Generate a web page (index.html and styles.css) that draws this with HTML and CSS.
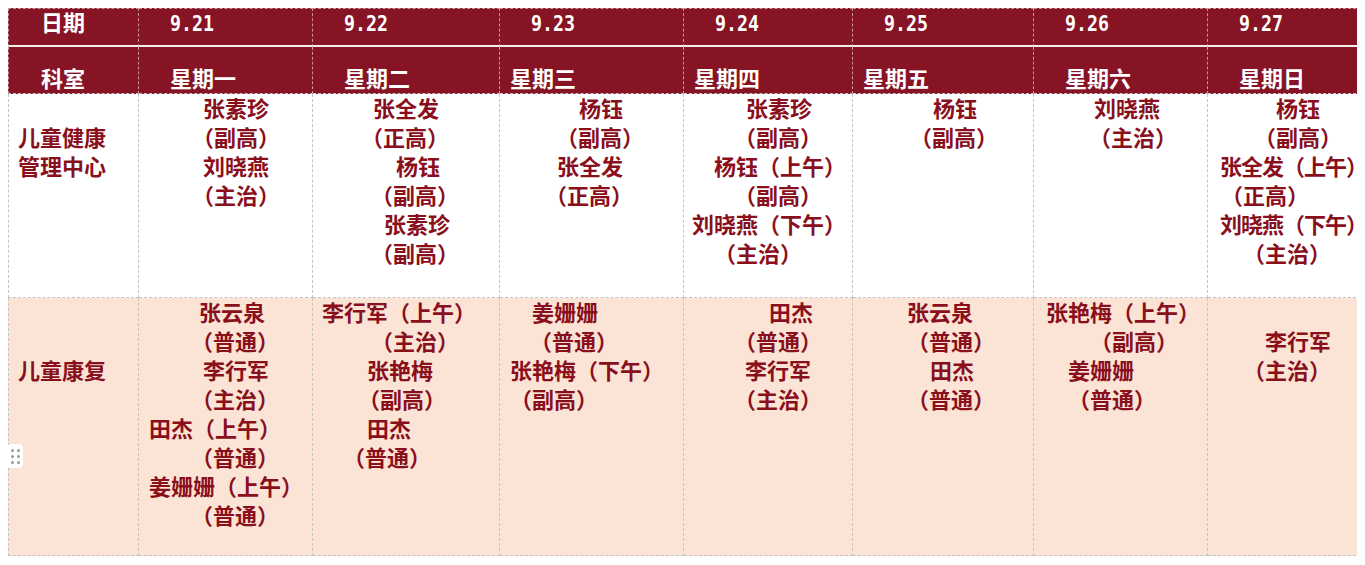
FILE: index.html
```html
<!DOCTYPE html>
<html lang="zh-CN">
<head>
<meta charset="utf-8">
<title>排班表</title>
<link rel="stylesheet" href="styles.css">
</head>
<body>
<div class="sheet">
  <div class="grid">
    <div class="hd r1 first">日期</div>
    <div class="hd r1"><span class="num">9.21</span></div>
    <div class="hd r1"><span class="num">9.22</span></div>
    <div class="hd r1"><span class="num">9.23</span></div>
    <div class="hd r1"><span class="num">9.24</span></div>
    <div class="hd r1"><span class="num">9.25</span></div>
    <div class="hd r1"><span class="num">9.26</span></div>
    <div class="hd r1"><span class="num">9.27</span></div>

    <div class="hd r2 first">科室</div>
    <div class="hd r2">星期一</div>
    <div class="hd r2">星期二</div>
    <div class="hd r2 near">星期三</div>
    <div class="hd r2 near">星期四</div>
    <div class="hd r2 near">星期五</div>
    <div class="hd r2">星期六</div>
    <div class="hd r2">星期日</div>

    <div class="cell b1 first dept skip1"><div class="ln">儿童健康</div><div class="ln">管理中心</div></div>
    <div class="cell b1">
      <div class="ln x64">张素珍</div><div class="ln x53">（副高）</div>
      <div class="ln x64">刘晓燕</div><div class="ln x53">（主治）</div>
    </div>
    <div class="cell b1">
      <div class="ln x60">张全发</div><div class="ln x48">（正高）</div>
      <div class="ln x83">杨钰</div><div class="ln x58">（副高）</div>
      <div class="ln x71">张素珍</div><div class="ln x58">（副高）</div>
    </div>
    <div class="cell b1">
      <div class="ln x79">杨钰</div><div class="ln x56">（副高）</div>
      <div class="ln x57">张全发</div><div class="ln x45">（正高）</div>
    </div>
    <div class="cell b1">
      <div class="ln x62">张素珍</div><div class="ln x50">（副高）</div>
      <div class="ln x30">杨钰（上午）</div><div class="ln x50">（副高）</div>
      <div class="ln x8">刘晓燕（下午）</div><div class="ln x30">（主治）</div>
    </div>
    <div class="cell b1">
      <div class="ln x80">杨钰</div><div class="ln x57">（副高）</div>
    </div>
    <div class="cell b1">
      <div class="ln x60">刘晓燕</div><div class="ln x55">（主治）</div>
    </div>
    <div class="cell b1">
      <div class="ln x68">杨钰</div><div class="ln x46">（副高）</div>
      <div class="ln x12 tight">张全发（上午）</div><div class="ln x13">（正高）</div>
      <div class="ln x12 tight">刘晓燕（下午）</div><div class="ln x35">（主治）</div>
    </div>

    <div class="cell b2 first dept skip2"><div class="ln">儿童康复</div></div>
    <div class="cell b2">
      <div class="ln x60">张云泉</div><div class="ln x52">（普通）</div>
      <div class="ln x64">李行军</div><div class="ln x52">（主治）</div>
      <div class="ln x10">田杰（上午）</div><div class="ln x52">（普通）</div>
      <div class="ln x10">姜姗姗（上午）</div><div class="ln x52">（普通）</div>
    </div>
    <div class="cell b2">
      <div class="ln x9">李行军（上午）</div><div class="ln x58">（主治）</div>
      <div class="ln x54">张艳梅</div><div class="ln x45">（副高）</div>
      <div class="ln x54">田杰</div><div class="ln x30">（普通）</div>
    </div>
    <div class="cell b2">
      <div class="ln x32">姜姗姗</div><div class="ln x30">（普通）</div>
      <div class="ln x10">张艳梅（下午）</div><div class="ln x10">（副高）</div>
    </div>
    <div class="cell b2">
      <div class="ln x85">田杰</div><div class="ln x50">（普通）</div>
      <div class="ln x61">李行军</div><div class="ln x50">（主治）</div>
    </div>
    <div class="cell b2">
      <div class="ln x54">张云泉</div><div class="ln x54">（普通）</div>
      <div class="ln x77">田杰</div><div class="ln x54">（普通）</div>
    </div>
    <div class="cell b2">
      <div class="ln x12">张艳梅（上午）</div><div class="ln x56">（副高）</div>
      <div class="ln x34">姜姗姗</div><div class="ln x34">（普通）</div>
    </div>
    <div class="cell b2 skip1">
      <div class="ln x57">李行军</div><div class="ln x35">（主治）</div>
    </div>
  </div>
  <div class="handle" aria-hidden="true"><i></i><i></i><i></i><i></i><i></i><i></i></div>
</div>
</body>
</html>
```

FILE: styles.css
```css
* { box-sizing: border-box; }
html, body { background: #ffffff; }
body {
  margin: 8px;
  font-family: "Noto Sans CJK SC", "Noto Sans", sans-serif;
}
.sheet { position: relative; }
.grid {
  display: grid;
  grid-template-columns: 131px 174px 187px 184px 169px 181px 174px 153px;
  grid-template-rows: 39px 47px 204px 258px;
  width: 1353px;
}
.hd {
  background: #861424;
  color: #ffffff;
  font-weight: 700;
  font-size: 22px;
  line-height: 22px;
  padding-left: 31px;
  border-right: 1px dashed rgba(255, 255, 255, 0.55);
  white-space: nowrap;
}
.hd.first { border-left: 1px dashed rgba(255, 255, 255, 0.55); padding-left: 32px; }
.hd.r1 {
  border-top: 1px dashed rgba(255, 255, 255, 0.55);
  border-bottom: 2px solid #f3eded;
  padding-top: 1px;
}
.num {
  display: inline-block;
  font-family: "DejaVu Sans Mono", "Liberation Mono", monospace;
  font-weight: 700;
  font-size: 22px;
  line-height: 22px;
  transform: scaleX(0.83);
  transform-origin: left center;
  letter-spacing: 0;
}
.hd.r2 {
  border-bottom: 1px dashed #c4c4c4;
  padding-top: 19px;
}
.hd.near { padding-left: 10px; }

.cell {
  color: #8a0f1c;
  font-weight: 700;
  font-size: 22px;
  border-right: 1px dashed #c4c4c4;
  border-bottom: 1px dashed #c4c4c4;
  white-space: nowrap;
}
.cell.first { border-left: 1px dashed #c4c4c4; }
.b1 { background: #ffffff; }
.b2 { background: #fbe4d5; }
.dept { padding-left: 9px; }
.skip1 { padding-top: 29px; }
.skip2 { padding-top: 58px; }
.ln { height: 29px; line-height: 26px; }
.tight { letter-spacing: -1px; }

.x8 { padding-left: 8px; }
.x9 { padding-left: 9px; }
.x10 { padding-left: 10px; }
.x12 { padding-left: 12px; }
.x13 { padding-left: 13px; }
.x30 { padding-left: 30px; }
.x32 { padding-left: 32px; }
.x34 { padding-left: 34px; }
.x35 { padding-left: 35px; }
.x45 { padding-left: 45px; }
.x46 { padding-left: 46px; }
.x48 { padding-left: 48px; }
.x50 { padding-left: 50px; }
.x52 { padding-left: 52px; }
.x53 { padding-left: 53px; }
.x54 { padding-left: 54px; }
.x55 { padding-left: 55px; }
.x56 { padding-left: 56px; }
.x57 { padding-left: 57px; }
.x58 { padding-left: 58px; }
.x60 { padding-left: 60px; }
.x61 { padding-left: 61px; }
.x62 { padding-left: 62px; }
.x64 { padding-left: 64px; }
.x68 { padding-left: 68px; }
.x71 { padding-left: 71px; }
.x77 { padding-left: 77px; }
.x79 { padding-left: 79px; }
.x80 { padding-left: 80px; }
.x83 { padding-left: 83px; }
.x85 { padding-left: 85px; }

.handle {
  position: absolute;
  left: -1px;
  top: 436px;
  width: 16px;
  height: 24px;
  background: #ffffff;
  border-radius: 4px;
  display: grid;
  grid-template-columns: 3px 3px;
  grid-auto-rows: 3px;
  column-gap: 3px;
  row-gap: 3px;
  align-content: center;
  justify-content: center;
}
.handle i {
  display: block;
  width: 3px;
  height: 3px;
  border-radius: 50%;
  background: #9a9a9a;
}
```
